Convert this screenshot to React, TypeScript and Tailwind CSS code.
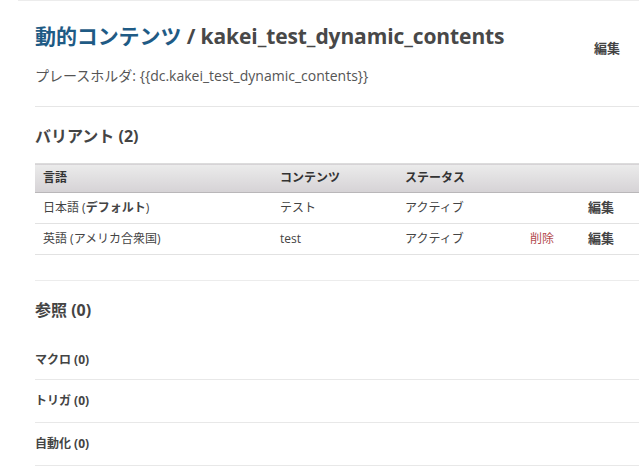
export default function App() {
  const font = { fontFamily: '"Open Sans", "Noto Sans CJK JP", sans-serif' }
  return (
    <div className="w-[639px] h-[473px] overflow-hidden bg-white pl-[18px] text-[#444]" style={font}>
      <div className="border-t border-[#ececec] pl-[17px]">
        {/* Header */}
        <div className="flex items-start justify-between pt-[19px] pr-[19px]">
          <h1 className="text-[21px] leading-[32px] font-bold tracking-[-0.1px]">
            <span className="text-[#1f5b85]">動的コンテンツ</span>
            <span className="text-[#484848]"> / kakei_test_dynamic_contents</span>
          </h1>
          <button type="button" className="mt-[18px] h-[20px] text-[13px] leading-[20px] font-bold text-[#444]">
            編集
          </button>
        </div>
        <p className="mt-[8px] text-[14px] leading-[20px] text-[#555]">
          プレースホルダ: {'{{dc.kakei_test_dynamic_contents}}'}
        </p>
        <div className="mt-[20px] border-t border-[#e6e6e6]" />

        {/* Variants */}
        <h2 className="mt-[18px] text-[16px] leading-[22px] font-bold text-[#444]">バリアント (2)</h2>
        <table className="mt-[16px] w-full border-collapse text-left text-[12px]">
          <thead>
            <tr className="h-[29px] bg-gradient-to-b from-[#ebebeb] to-[#d6d3d6] border-t border-[#dcdcdc] border-b border-b-[#b9b7b9]">
              <th className="w-[245px] pl-[8px] font-bold text-[#333]">言語</th>
              <th className="w-[125px] font-bold text-[#333]">コンテンツ</th>
              <th className="w-[125px] font-bold text-[#333]">ステータス</th>
              <th className="w-[58px]" />
              <th />
            </tr>
          </thead>
          <tbody className="text-[#444]">
            <tr className="h-[31px] border-b border-[#e2e2e2]">
              <td className="pl-[8px]">
                日本語 (<span className="font-bold">デフォルト</span>)
              </td>
              <td>テスト</td>
              <td>アクティブ</td>
              <td />
              <td className="text-[13px] font-bold text-[#444]">編集</td>
            </tr>
            <tr className="h-[31px] border-b border-[#e2e2e2]">
              <td className="pl-[8px]">英語 (アメリカ合衆国)</td>
              <td>test</td>
              <td>アクティブ</td>
              <td className="text-[#b2494c]">削除</td>
              <td className="text-[13px] font-bold text-[#444]">編集</td>
            </tr>
          </tbody>
        </table>
        <div className="mt-[25px] border-t border-[#ececec]" />

        {/* References */}
        <h2 className="mt-[18px] text-[16px] leading-[22px] font-bold text-[#444]">参照 (0)</h2>
        <div className="mt-[15px] flex flex-col text-[12px] font-bold text-[#444]">
          <div className="h-[44px] flex items-center border-b border-[#e8e8e8] pt-[4px]">マクロ (0)</div>
          <div className="h-[43px] flex items-center border-b border-[#e8e8e8]">トリガ (0)</div>
          <div className="h-[43px] flex items-center border-b border-[#e8e8e8]">自動化 (0)</div>
        </div>
      </div>
    </div>
  )
}
